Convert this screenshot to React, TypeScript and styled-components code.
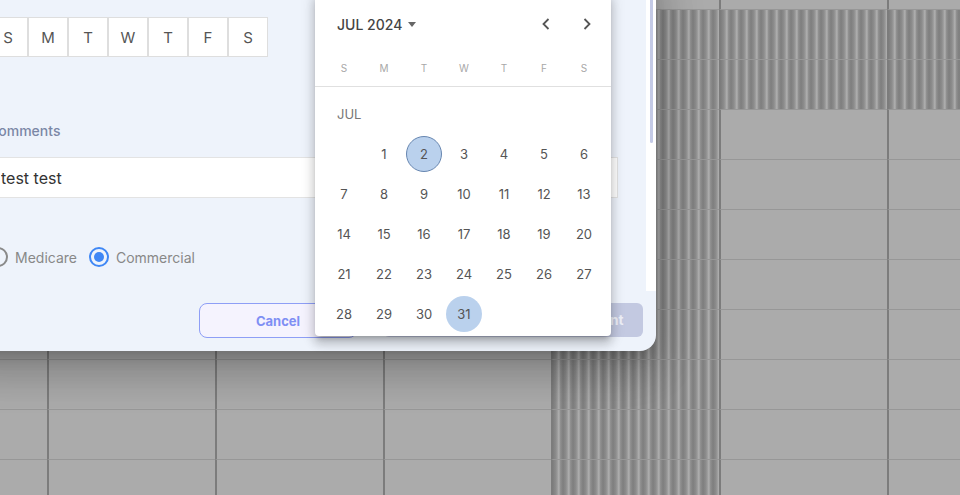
import React from "react";
import styled, {createGlobalStyle} from "styled-components";

const weekdays = ["S", "M", "T", "W", "T", "F", "S"];
// July 2024 starts on a Monday
const julyCells: (number | null)[] = [null, ...Array.from({length: 31}, (_, i) => i + 1)];

const scheduleRows = 11;
const scheduleCols = 7;

function isBlocked(row: number, col: number) {
    if (row === 0) return false;
    if (col === 4) return true;
    return col >= 5 && row <= 2;
}

export default function App() {
    return (
        <>
            <GlobalStyle/>
            <Page>
                <Schedule>
                    {Array.from({length: scheduleRows * scheduleCols}, (_, i) => {
                        const row = Math.floor(i / scheduleCols);
                        const col = i % scheduleCols;
                        return <Cell key={i} $first={col === 0} $striped={isBlocked(row, col)}/>;
                    })}
                </Schedule>

                <Dialog>
                    <Body>
                        <BodyContent>
                            <DayRow>
                                {weekdays.map((d, i) => (
                                    <DayToggle key={i}>{d}</DayToggle>
                                ))}
                            </DayRow>
                            <FieldLabel>Comments</FieldLabel>
                            <TextInput defaultValue="test test"/>
                            <RadioRow>
                                <RadioOption>
                                    <RadioCircle $checked={false}/>
                                    <RadioText>Medicare</RadioText>
                                </RadioOption>
                                <RadioOption>
                                    <RadioCircle $checked={true}><RadioDot/></RadioCircle>
                                    <RadioText>Commercial</RadioText>
                                </RadioOption>
                            </RadioRow>
                        </BodyContent>
                        <ScrollTrack>
                            <ScrollThumb/>
                        </ScrollTrack>
                    </Body>
                    <Footer>
                        <CancelButton>Cancel</CancelButton>
                        <SubmitButton disabled>Schedule Recurring Appointment</SubmitButton>
                    </Footer>
                </Dialog>

                <Popover>
                    <CalendarHeader>
                        <MonthTitle>
                            JUL 2024
                            <Caret/>
                        </MonthTitle>
                        <NavButton aria-label="previous month">
                            <svg width="10" height="12" viewBox="0 0 10 12">
                                <polyline points="7.5,1 2.5,6 7.5,11" fill="none" stroke="#555" strokeWidth="1.8"/>
                            </svg>
                        </NavButton>
                        <NavButton aria-label="next month">
                            <svg width="10" height="12" viewBox="0 0 10 12">
                                <polyline points="2.5,1 7.5,6 2.5,11" fill="none" stroke="#555" strokeWidth="1.8"/>
                            </svg>
                        </NavButton>
                    </CalendarHeader>
                    <WeekHeader>
                        {weekdays.map((d, i) => (
                            <WeekLetter key={i}>{d}</WeekLetter>
                        ))}
                    </WeekHeader>
                    <MonthLabel>JUL</MonthLabel>
                    <DaysGrid>
                        {julyCells.map((day, i) => (
                            <DayCell key={i}>
                                {day && (
                                    <DayCircle $selected={day === 2} $hovered={day === 31}>{day}</DayCircle>
                                )}
                            </DayCell>
                        ))}
                    </DaysGrid>
                </Popover>
            </Page>
        </>
    );
}

const GlobalStyle = createGlobalStyle`
  html, body {
    margin: 0;
    padding: 0;
  }

  body {
    font-family: Inter, "Liberation Sans", sans-serif;
    overflow: hidden;
  }
`

const Page = styled.div`
  position: relative;
  width: 960px;
  height: 495px;
  overflow: hidden;
  background: #ababab;
`

const Schedule = styled.div`
  display: grid;
  grid-template-columns: 47px repeat(5, 168px) 1fr;
  grid-template-rows: 10px repeat(10, 50px);
`

const Cell = styled.div<{ $first?: boolean; $striped?: boolean }>`
  border-left: ${p => (p.$first ? "none" : "2px solid #7c7c7c")};
  border-bottom: 1px solid #979797;
  background: ${p => p.$striped
          ? "repeating-linear-gradient(90deg, #7e7e7e 0px, #8d8d8d 3px, #a3a3a3 5px, #b4b4b4 6px, #939393 7px, #7e7e7e 10px)"
          : "#ababab"};
`

const Dialog = styled.div`
  position: absolute;
  left: -40px;
  top: -40px;
  width: 696px;
  height: 391px;
  display: flex;
  flex-direction: column;
  background: #eef3fb;
  border-radius: 16px;
  box-shadow: 0 11px 15px -7px rgba(0, 0, 0, 0.2),
  0 24px 38px 3px rgba(0, 0, 0, 0.14),
  0 9px 46px 8px rgba(0, 0, 0, 0.12);
`

const Body = styled.div`
  flex: 1;
  display: flex;
  min-height: 0;
`

const BodyContent = styled.div`
  flex: 1;
  display: flex;
  flex-direction: column;
  padding: 57px 28px 0 28px;
`

const ScrollTrack = styled.div`
  width: 10px;
  box-sizing: border-box;
  padding-left: 4px;
  background: #fff;
`

const ScrollThumb = styled.div`
  width: 3px;
  height: 183px;
  border-radius: 2px;
  background: #c4cae6;
`

const DayRow = styled.div`
  display: flex;
`

const DayToggle = styled.button`
  width: 40px;
  height: 40px;
  box-sizing: border-box;
  border: 1px solid #dedede;
  background: #fff;
  color: #555;
  font-family: inherit;
  font-size: 15px;
  padding: 0;
`

const FieldLabel = styled.label`
  margin-top: 64px;
  font-size: 14px;
  line-height: 20px;
  font-weight: 500;
  color: #7b87a6;
`

const TextInput = styled.input`
  margin-top: 16px;
  height: 41px;
  box-sizing: border-box;
  border: 1px solid #e3e3e3;
  background: #fff;
  padding: 0 12px;
  font-family: inherit;
  font-size: 16px;
  color: #333;
  outline: none;
`

const RadioRow = styled.div`
  margin-top: 47px;
  display: flex;
  align-items: center;
  gap: 12px;
  height: 24px;
`

const RadioOption = styled.div`
  display: flex;
  align-items: center;
  gap: 7px;
`

const RadioCircle = styled.span<{ $checked: boolean }>`
  width: 20px;
  height: 20px;
  box-sizing: border-box;
  border-radius: 50%;
  border: 2px solid ${p => (p.$checked ? "#3f87f5" : "#8a8a8a")};
  display: flex;
  align-items: center;
  justify-content: center;
`

const RadioDot = styled.span`
  width: 10px;
  height: 10px;
  border-radius: 50%;
  background: #3f87f5;
`

const RadioText = styled.span`
  font-size: 14px;
  color: #888;
`

const Footer = styled.div`
  height: 60px;
  flex-shrink: 0;
  display: flex;
  justify-content: flex-end;
  align-items: flex-start;
  gap: 26px;
  padding: 12px 13px 0 0;
  box-sizing: border-box;
`

const CancelButton = styled.button`
  width: 158px;
  height: 35px;
  border: 1px solid #8e9ef6;
  border-radius: 8px;
  background: #f5f3fe;
  color: #7f8ff4;
  font-family: inherit;
  font-size: 13px;
  font-weight: 700;
`

const SubmitButton = styled.button`
  width: 260px;
  height: 34px;
  border: none;
  border-radius: 6px;
  background: #c3c9e1;
  color: #eef0f8;
  font-family: inherit;
  font-size: 13.6px;
  font-weight: 700;
  white-space: nowrap;
`

const Popover = styled.div`
  position: absolute;
  left: 315px;
  top: -8px;
  width: 296px;
  padding-bottom: 2px;
  background: #fff;
  border-radius: 4px;
  box-shadow: 0 5px 5px -3px rgba(0, 0, 0, 0.2),
  0 8px 10px 1px rgba(0, 0, 0, 0.14),
  0 3px 14px 2px rgba(0, 0, 0, 0.12);
`

const CalendarHeader = styled.div`
  margin-top: 12px;
  height: 40px;
  display: flex;
  align-items: center;
  gap: 9px;
  padding: 0 8px 0 22px;
`

const MonthTitle = styled.div`
  margin-right: auto;
  display: flex;
  align-items: center;
  gap: 6px;
  font-size: 14px;
  font-weight: 500;
  color: #444;
`

const Caret = styled.span`
  width: 0;
  height: 0;
  border-left: 4.5px solid transparent;
  border-right: 4.5px solid transparent;
  border-top: 5px solid #666;
`

const NavButton = styled.button`
  width: 32px;
  height: 32px;
  border: none;
  background: none;
  padding: 0;
  display: flex;
  align-items: center;
  justify-content: center;
`

const WeekHeader = styled.div`
  margin-top: 12px;
  display: grid;
  grid-template-columns: repeat(7, 40px);
  padding: 0 7px 6px 9px;
  border-bottom: 1px solid #e0e0e0;
`

const WeekLetter = styled.span`
  height: 24px;
  display: flex;
  align-items: center;
  justify-content: center;
  font-size: 10px;
  color: #a8a8a8;
`

const MonthLabel = styled.div`
  margin-top: 17px;
  height: 20px;
  line-height: 20px;
  padding-left: 22px;
  font-size: 13px;
  color: #777;
`

const DaysGrid = styled.div`
  margin-top: 10px;
  display: grid;
  grid-template-columns: repeat(7, 40px);
  grid-auto-rows: 40px;
  padding: 0 7px 0 9px;
`

const DayCell = styled.div`
  display: flex;
  align-items: center;
  justify-content: center;
`

const DayCircle = styled.span<{ $selected?: boolean; $hovered?: boolean }>`
  width: 36px;
  height: 36px;
  box-sizing: border-box;
  border-radius: 50%;
  display: flex;
  align-items: center;
  justify-content: center;
  font-size: 13px;
  color: #555;
  background: ${p => (p.$selected || p.$hovered ? "#bad1ed" : "transparent")};
  border: 1px solid ${p => (p.$selected ? "#6786b0" : "transparent")};
`
